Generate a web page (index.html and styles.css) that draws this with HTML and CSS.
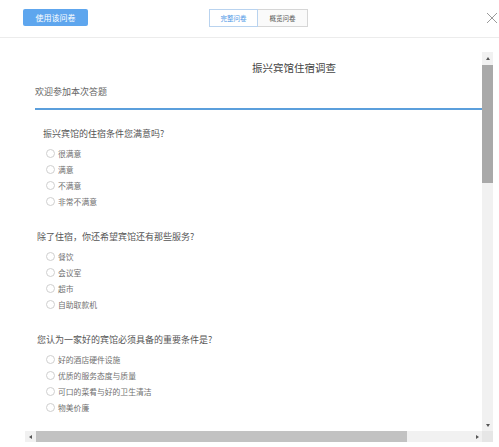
FILE: index.html
```html
<!DOCTYPE html>
<html lang="zh">
<head>
<meta charset="utf-8">
<link rel="stylesheet" href="styles.css">
</head>
<body>
<div class="header">
  <button class="use-btn">使用该问卷</button>
  <div class="tabs">
    <span class="tab active">完整问卷</span>
    <span class="tab">概览问卷</span>
  </div>
  <span class="close">
    <svg width="12" height="12" viewBox="0 0 12 12"><path d="M1 1 L11 11 M11 1 L1 11" stroke="#9a9a9a" stroke-width="1" fill="none"/></svg>
  </span>
</div>
<div class="main">
  <div class="frame">
    <div class="viewport">
      <div class="page">
        <div class="title">振兴宾馆住宿调查</div>
        <div class="desc">欢迎参加本次答题</div>
        <div class="rule"></div>
        <div class="question q-first">
          <div class="q-title first">振兴宾馆的住宿条件您满意吗?</div>
          <div class="opt"><span class="radio"></span>很满意</div>
          <div class="opt"><span class="radio"></span>满意</div>
          <div class="opt"><span class="radio"></span>不满意</div>
          <div class="opt"><span class="radio"></span>非常不满意</div>
        </div>
        <div class="question">
          <div class="q-title">除了住宿，你还希望宾馆还有那些服务?</div>
          <div class="opt"><span class="radio"></span>餐饮</div>
          <div class="opt"><span class="radio"></span>会议室</div>
          <div class="opt"><span class="radio"></span>超市</div>
          <div class="opt"><span class="radio"></span>自助取款机</div>
        </div>
        <div class="question">
          <div class="q-title">您认为一家好的宾馆必须具备的重要条件是?</div>
          <div class="opt"><span class="radio"></span>好的酒店硬件设施</div>
          <div class="opt"><span class="radio"></span>优质的服务态度与质量</div>
          <div class="opt"><span class="radio"></span>可口的菜肴与好的卫生清洁</div>
          <div class="opt"><span class="radio"></span>物美价廉</div>
        </div>
      </div>
    </div>
    <div class="vbar">
      <div class="sb-btn"><span class="tri up"></span></div>
      <div class="vthumb"></div>
      <div class="vtrack"></div>
      <div class="sb-btn"><span class="tri down"></span></div>
    </div>
    <div class="hbar">
      <div class="sb-btn h"><span class="tri left"></span></div>
      <div class="hthumb"></div>
      <div class="htrack"></div>
      <div class="sb-btn h"><span class="tri right"></span></div>
    </div>
    <div class="corner"></div>
  </div>
</div>
</body>
</html>
```
FILE: styles.css
```css
* { box-sizing: border-box; }
html, body { margin: 0; padding: 0; }
body {
  width: 499px;
  height: 447px;
  overflow: hidden;
  background: #fff;
  font-family: "Noto Sans CJK SC", "Noto Sans", sans-serif;
  color: #555;
}
.header {
  height: 38px;
  border-bottom: 1px solid #ececec;
  display: flex;
  align-items: center;
  padding-left: 23px;
  padding-right: 1px;
  padding-bottom: 2px;
}
.use-btn {
  width: 65px;
  height: 17px;
  border: none;
  border-radius: 2px;
  background: #5ea6ee;
  color: #fff;
  font-family: inherit;
  font-size: 8px;
  padding: 0;
  line-height: 17px;
}
.tabs {
  display: flex;
  margin-left: 121px;
}
.tab {
  width: 50px;
  height: 18px;
  border: 1px solid #d6d6d6;
  font-size: 6.5px;
  line-height: 16px;
  text-align: center;
  color: #555;
  background: #fafafa;
}
.tab + .tab { border-left: none; }
.tab.active {
  width: 49px;
  border-color: #b9d3ef;
  color: #4d97e6;
  background: #fff;
}
.close {
  margin-left: auto;
  display: flex;
  width: 12px;
  height: 12px;
}
.main {
  padding: 14px 6px 0 25px;
}
.frame {
  width: 468px;
  height: 390px;
  display: grid;
  grid-template-columns: 1fr 11px;
  grid-template-rows: 1fr 11px;
}
.viewport {
  overflow: hidden;
  position: relative;
}
.page {
  width: 640px;
  padding: 9px 0 0 10px;
}
.title {
  margin-left: 217px;
  font-size: 10.5px;
  line-height: 14px;
  color: #444;
}
.desc {
  margin-top: 10px;
  font-size: 9px;
  line-height: 14px;
  color: #666;
}
.rule {
  margin-top: 9px;
  height: 2px;
  background: #5b9fdc;
}
.question { margin-top: 21px; }
.question.q-first { margin-top: 17px; }
.q-title {
  padding-left: 2px;
  font-size: 9px;
  line-height: 14px;
  color: #555;
  margin-bottom: 4px;
}
.q-title.first { padding-left: 8px; }
.opt {
  display: flex;
  align-items: center;
  padding-left: 11px;
  height: 16px;
  font-size: 7.8px;
  color: #707070;
}
.radio {
  width: 9px;
  height: 9px;
  border: 1px solid #cfcfcf;
  border-radius: 50%;
  background: #fff;
  margin-right: 3px;
  flex: none;
}
.vbar {
  display: flex;
  flex-direction: column;
  background: #f1f1f1;
}
.sb-btn {
  height: 12px;
  display: flex;
  align-items: center;
  justify-content: center;
  background: #f1f1f1;
  flex: none;
}
.sb-btn.h { width: 10px; height: 11px; }
.vthumb {
  margin-top: 1px;
  height: 118px;
  background: #a9a9a9;
  flex: none;
}
.vtrack { flex: 1; }
.hbar {
  display: flex;
  background: #f1f1f1;
}
.hthumb {
  margin-left: 1px;
  width: 371px;
  background: #c2c2c2;
  flex: none;
}
.htrack { flex: 1; }
.corner { background: #e6e6e6; }
.tri { width: 0; height: 0; border-style: solid; }
.tri.up { border-width: 0 2.5px 3px 2.5px; border-color: transparent transparent #555 transparent; }
.tri.down { border-width: 3px 2.5px 0 2.5px; border-color: #555 transparent transparent transparent; }
.tri.left { border-width: 2.5px 3px 2.5px 0; border-color: transparent #555 transparent transparent; }
.tri.right { border-width: 2.5px 0 2.5px 3px; border-color: transparent transparent transparent #555; }
```
